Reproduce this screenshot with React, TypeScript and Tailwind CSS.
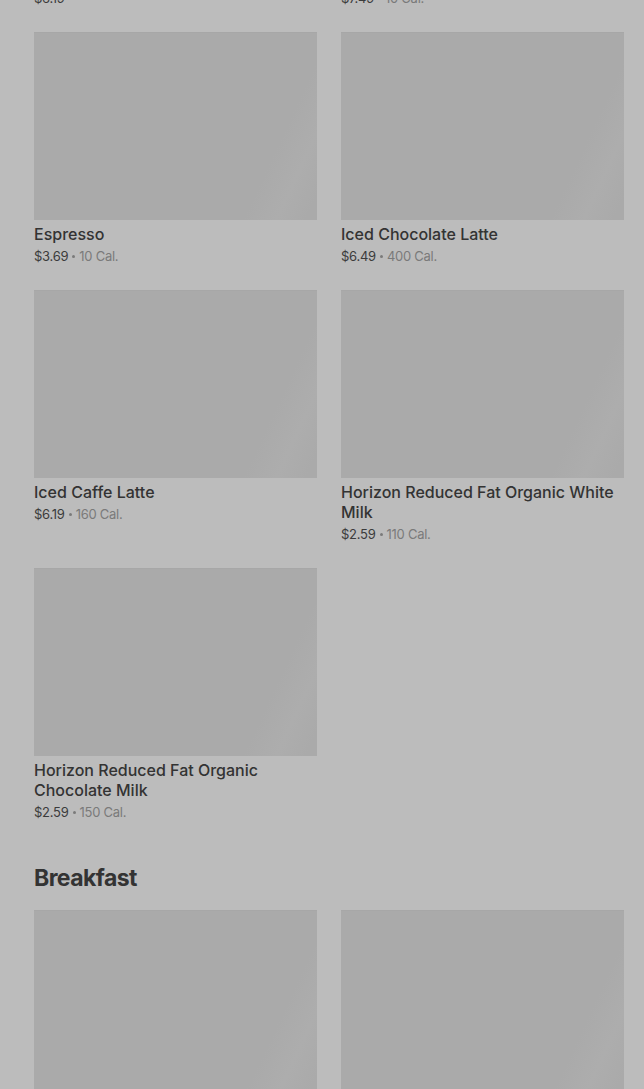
type Item = { name: string; price: string; cal?: string };

const topRow: Item[] = [
  { name: 'Caffe Mocha', price: '$6.19' },
  { name: 'Iced Coffee', price: '$7.49', cal: '10 Cal.' },
];

const drinks: Item[] = [
  { name: 'Espresso', price: '$3.69', cal: '10 Cal.' },
  { name: 'Iced Chocolate Latte', price: '$6.49', cal: '400 Cal.' },
  { name: 'Iced Caffe Latte', price: '$6.19', cal: '160 Cal.' },
  { name: 'Horizon Reduced Fat Organic White Milk', price: '$2.59', cal: '110 Cal.' },
  { name: 'Horizon Reduced Fat Organic Chocolate Milk', price: '$2.59', cal: '150 Cal.' },
];

const breakfast: Item[] = [
  { name: 'Bacon, Gouda & Egg Sandwich', price: '$5.99', cal: '360 Cal.' },
  { name: 'Spinach, Feta & Egg White Wrap', price: '$5.49', cal: '290 Cal.' },
];

function Card({ item }: { item: Item }) {
  return (
    <div className="flex flex-col">
      <div className="h-[188px] w-full bg-[linear-gradient(115deg,#aaaaaa_0%,#aaaaaa_80%,#adadad_89%,#aaaaaa_97%)] border-t border-[#a7a7a7]" />
      <div className="mt-1 text-base leading-5 font-medium text-[#333333]">{item.name}</div>
      <div className="mt-0.5 flex h-5 items-center text-[13px] leading-5 tracking-[-0.02em] text-[#3b3b3b]">
        <span>{item.price}</span>
        {item.cal && (
          <>
            <span className="mx-[4px] h-[3px] w-[3px] rounded-full bg-[#7a7a7a]" />
            <span className="text-[#7a7a7a]">{item.cal}</span>
          </>
        )}
      </div>
    </div>
  );
}

function App() {
  return (
    <div
      className="h-[1089px] overflow-hidden bg-[#bcbcbc] pl-[34px] pr-[20px]"
      style={{ fontFamily: 'Inter, "Noto Sans", sans-serif' }}
    >
      <div className="-mt-[226px] grid grid-cols-2 gap-x-6 gap-y-6">
        {topRow.map((item) => (
          <Card key={item.name} item={item} />
        ))}
        {drinks.map((item) => (
          <Card key={item.name} item={item} />
        ))}
      </div>

      <h2 className="mt-10 mb-4 text-[23px] leading-8 font-bold tracking-tight text-[#333333]">Breakfast</h2>

      <div className="grid grid-cols-2 gap-x-6 gap-y-6">
        {breakfast.map((item) => (
          <Card key={item.name} item={item} />
        ))}
      </div>
    </div>
  );
}

export default App;
